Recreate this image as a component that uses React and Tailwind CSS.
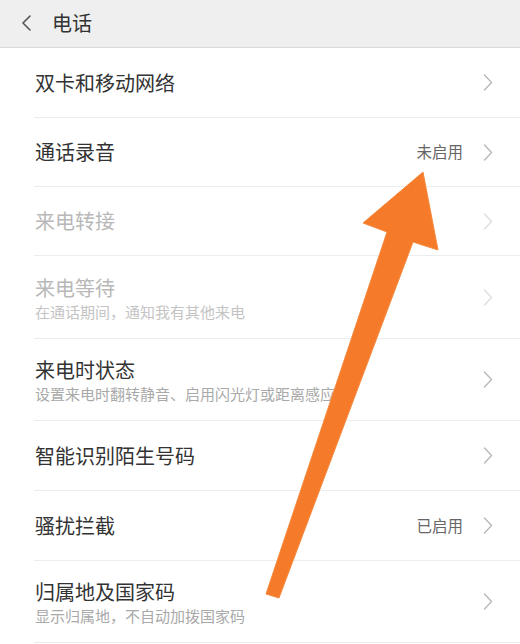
import React from 'react';

const rows = [
  { title: '双卡和移动网络', h: 'h-[70px]' },
  { title: '通话录音', value: '未启用', h: 'h-[69px]' },
  { title: '来电转接', disabled: true, h: 'h-[69px]' },
  { title: '来电等待', sub: '在通话期间，通知我有其他来电', disabled: true, h: 'h-[83px]' },
  { title: '来电时状态', sub: '设置来电时翻转静音、启用闪光灯或距离感应器', h: 'h-[82px]' },
  { title: '智能识别陌生号码', h: 'h-[70px]' },
  { title: '骚扰拦截', value: '已启用', h: 'h-[70px]' },
  { title: '归属地及国家码', sub: '显示归属地，不自动加拨国家码', h: 'h-[82px]' },
];

function Chevron({ color }) {
  return (
    <svg width="10" height="17" viewBox="0 0 10 17" fill="none">
      <path d="M1.5 1 L8.5 8.5 L1.5 16" stroke={color} strokeWidth="1.4" strokeLinecap="round" strokeLinejoin="round" />
    </svg>
  );
}

function Row({ row }) {
  const titleColor = row.disabled ? 'text-[#b8b8b8]' : 'text-[#333333]';
  const subColor = row.disabled ? 'text-[#c4c4c4]' : 'text-[#a9a9a9]';
  return (
    <div className={`ml-[34px] ${row.h} border-b border-[#ededed] flex items-center pl-[1px] pr-[27px]`}>
      <div className={`flex-1 min-w-0 flex flex-col ${row.sub ? 'pt-[4px]' : ''}`}>
        <p className={`text-[20px] leading-[24px] whitespace-nowrap ${titleColor}`}>{row.title}</p>
        {row.sub && (
          <p className={`text-[15px] leading-[22px] mt-[1px] whitespace-nowrap overflow-hidden ${subColor}`}>{row.sub}</p>
        )}
      </div>
      {row.value && <span className="text-[15.5px] text-[#666666] mr-[20px]">{row.value}</span>}
      <Chevron color={row.disabled ? '#dedede' : '#b9b9b9'} />
    </div>
  );
}

export default function App() {
  return (
    <div className="relative w-[520px] h-[644px] bg-white overflow-hidden" style={{ fontFamily: '"Noto Sans CJK SC", "Noto Sans", sans-serif' }}>
      <header className="h-[48px] bg-[#efefef] border-b border-[#dadada] flex items-center">
        <svg className="ml-[20px] -mt-[2px]" width="13" height="16" viewBox="0 0 13 16" fill="none">
          <path d="M10 1 L3 8 L10 15" stroke="#555555" strokeWidth="1.6" strokeLinecap="round" strokeLinejoin="round" />
        </svg>
        <h1 className="ml-[19px] -mt-[2px] text-[20px] text-[#333333]">电话</h1>
      </header>

      <div>
        {rows.map((row) => (
          <Row key={row.title} row={row} />
        ))}
      </div>

      <svg className="absolute inset-0 pointer-events-none" width="520" height="644" viewBox="0 0 520 644">
        <polygon
          points="423,172 438,250 413,242 279,598 266,594 387,232 363,223"
          fill="#f57a29"
          stroke="#f68a3e"
          strokeWidth="1"
          strokeLinejoin="round"
        />
      </svg>
    </div>
  );
}
